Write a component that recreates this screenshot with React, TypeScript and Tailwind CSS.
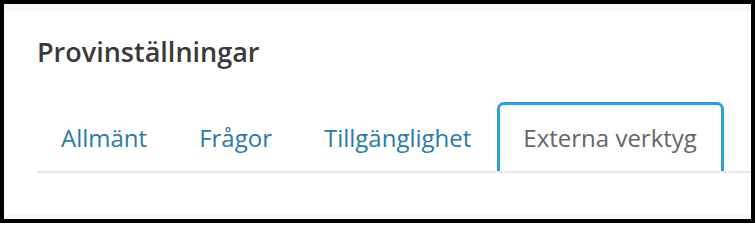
const tabs = ["Allmänt", "Frågor", "Tillgänglighet", "Externa verktyg"];

export default function App() {
  const active = 3;
  return (
    <div className="w-[755px] h-[223px] bg-black p-[4px]" style={{ fontFamily: "'Open Sans', Lato, sans-serif" }}>
      <div className="h-full bg-white flex flex-col">
        <div className="h-[7px] bg-[#f7f7f7]" />
        <div className="flex-1 pl-[33px] pt-[24px]">
          <h1 className="text-[27px] leading-[34px] font-semibold text-[#3a3a3a]">Provinställningar</h1>
          <div className="mt-[33px] flex border-b-2 border-[#e6e6e6]">
            <div className="flex -ml-[2px]">
              {tabs.map((t, i) => (
                <div
                  key={t}
                  className={
                    i === active
                      ? "h-[69px] -mb-[2px] flex items-center pl-[23px] pr-[24px] pb-[1px] border-[3px] border-b-0 border-[#2b9fe3] rounded-t-[7px] bg-white text-[24px] text-[#666666]"
                      : "h-[69px] flex items-center px-[23px] pb-[1px] border-[3px] border-b-0 border-transparent text-[24px] text-[#2b7aa9]"
                  }
                >
                  {t}
                </div>
              ))}
            </div>
          </div>
        </div>
        <div className="h-[4px] bg-[#f7f7f7]" />
      </div>
    </div>
  );
}
